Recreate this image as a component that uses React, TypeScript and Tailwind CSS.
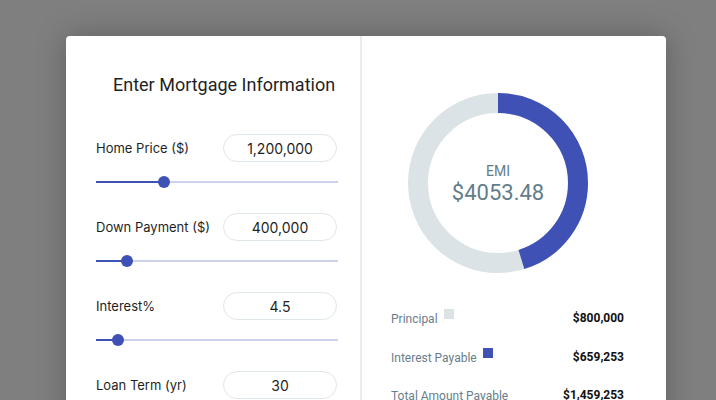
import React from "react";

interface Field {
  label: string;
  value: string;
  pct: number;
}

const fields: Field[] = [
  { label: "Home Price ($)", value: "1,200,000", pct: 28 },
  { label: "Down Payment ($)", value: "400,000", pct: 12.8 },
  { label: "Interest%", value: "4.5", pct: 9 },
  { label: "Loan Term (yr)", value: "30", pct: 20 },
];

function Slider({ pct }: { pct: number }) {
  return (
    <div className="relative h-[2px] w-full bg-[#cdd1ea]">
      <div className="h-full bg-[#3f51b5]" style={{ width: `${pct}%` }} />
      <div
        className="absolute top-1/2 h-3 w-3 -translate-x-1/2 -translate-y-1/2 rounded-full bg-[#3f51b5]"
        style={{ left: `${pct}%` }}
      />
    </div>
  );
}

function Donut() {
  const r = 80;
  const c = 2 * Math.PI * r;
  const share = 659253 / 1459253;
  return (
    <div className="relative h-[180px] w-[180px]">
      <svg width="180" height="180" viewBox="0 0 180 180">
        <circle cx="90" cy="90" r={r} fill="none" stroke="#dce3e6" strokeWidth="20" />
        <circle
          cx="90"
          cy="90"
          r={r}
          fill="none"
          stroke="#3f51b5"
          strokeWidth="20"
          strokeDasharray={`${c * share} ${c}`}
          transform="rotate(-90 90 90)"
        />
      </svg>
      <div className="absolute inset-0 flex flex-col items-center justify-center pt-[1px] font-['Roboto',sans-serif] text-[#637c89]">
        <span className="text-[14px] leading-[18px]">EMI</span>
        <span className="text-[22px] leading-[26px]">$4053.48</span>
      </div>
    </div>
  );
}

const legend = [
  { label: "Principal", swatch: "bg-[#dce3e6]", value: "$800,000" },
  { label: "Interest Payable", swatch: "bg-[#3f51b5]", value: "$659,253" },
  { label: "Total Amount Payable", swatch: "", value: "$1,459,253" },
];

export default function App() {
  return (
    <div className="h-[400px] w-[716px] overflow-hidden bg-[#7f7f7f] pl-[66px] pt-[36px]">
      <div className="flex h-[420px] w-[600px] rounded-[4px] bg-white shadow-[0_0_30px_rgba(0,0,0,0.25)]">
        <div className="w-[296px] border-r-2 border-[#ececec] pl-[30px] pr-[22px] font-['Inter',sans-serif]">
          <h1 className="mt-[38px] pl-[17px] font-['Roboto',sans-serif] text-[18px] leading-[22px] text-[#1f1f1f]">
            Enter Mortgage Information
          </h1>
          <div className="mt-[38px] flex flex-col">
            {fields.map((f) => (
              <div key={f.label} className="h-[79px]">
                <div className="flex items-center justify-between">
                  <span className="mt-[1px] text-[13px] text-[#1f1f1f]">{f.label}</span>
                  <div className="mr-[1px] flex h-[28px] w-[114px] items-center justify-center rounded-full border border-[#dfe6e9] text-[14px] text-[#1f1f1f]">
                    {f.value}
                  </div>
                </div>
                <div className="mt-[19px]">
                  <Slider pct={f.pct} />
                </div>
              </div>
            ))}
          </div>
        </div>
        <div className="flex-1 pl-[29px] pr-[42px] font-['Roboto',sans-serif]">
          <div className="ml-[17px] mt-[57px]">
            <Donut />
          </div>
          <div className="mt-[36px] flex flex-col">
            {legend.map((l) => (
              <div key={l.label} className="flex h-[38.5px] items-start justify-between">
                <div className="flex items-start gap-[6px]">
                  <span className="mt-[2px] text-[12px] leading-[16px] text-[#687e8b]">{l.label}</span>
                  {l.swatch && <span className={`h-[10px] w-[10px] ${l.swatch}`} />}
                </div>
                <span className="mt-[1px] text-[12px] font-bold leading-[16px] text-[#111]">{l.value}</span>
              </div>
            ))}
          </div>
        </div>
      </div>
    </div>
  );
}
